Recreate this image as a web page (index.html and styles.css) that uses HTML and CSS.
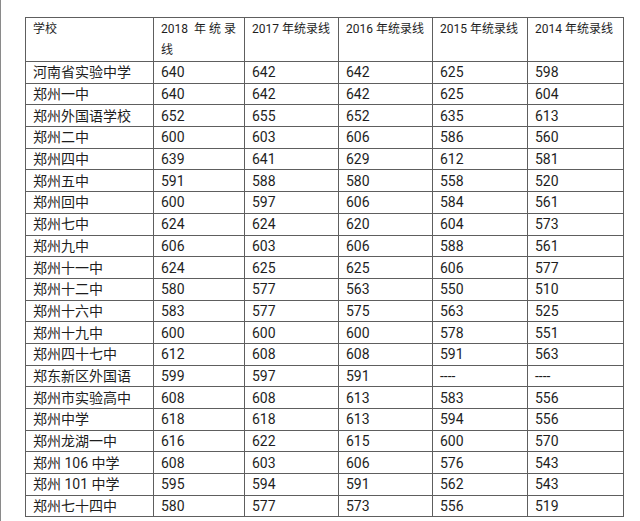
FILE: index.html
```html
<!DOCTYPE html>
<html lang="zh-CN">
<head>
<meta charset="utf-8">
<title>郑州高中统录线</title>
<link rel="stylesheet" href="styles.css">
</head>
<body>
<div class="page">
<table class="scores">
<colgroup>
<col class="c-school"><col class="c-2018"><col class="c-2017"><col class="c-2016"><col class="c-2015"><col class="c-2014">
</colgroup>
<thead>
<tr><th>学校</th><th class="wrap">2018 年统录线</th><th>2017 年统录线</th><th>2016 年统录线</th><th>2015 年统录线</th><th>2014 年统录线</th></tr>
</thead>
<tbody>
<tr><td>河南省实验中学</td><td>640</td><td>642</td><td>642</td><td>625</td><td>598</td></tr>
<tr><td>郑州一中</td><td>640</td><td>642</td><td>642</td><td>625</td><td>604</td></tr>
<tr><td>郑州外国语学校</td><td>652</td><td>655</td><td>652</td><td>635</td><td>613</td></tr>
<tr><td>郑州二中</td><td>600</td><td>603</td><td>606</td><td>586</td><td>560</td></tr>
<tr><td>郑州四中</td><td>639</td><td>641</td><td>629</td><td>612</td><td>581</td></tr>
<tr><td>郑州五中</td><td>591</td><td>588</td><td>580</td><td>558</td><td>520</td></tr>
<tr><td>郑州回中</td><td>600</td><td>597</td><td>606</td><td>584</td><td>561</td></tr>
<tr><td>郑州七中</td><td>624</td><td>624</td><td>620</td><td>604</td><td>573</td></tr>
<tr><td>郑州九中</td><td>606</td><td>603</td><td>606</td><td>588</td><td>561</td></tr>
<tr><td>郑州十一中</td><td>624</td><td>625</td><td>625</td><td>606</td><td>577</td></tr>
<tr><td>郑州十二中</td><td>580</td><td>577</td><td>563</td><td>550</td><td>510</td></tr>
<tr><td>郑州十六中</td><td>583</td><td>577</td><td>575</td><td>563</td><td>525</td></tr>
<tr><td>郑州十九中</td><td>600</td><td>600</td><td>600</td><td>578</td><td>551</td></tr>
<tr><td>郑州四十七中</td><td>612</td><td>608</td><td>608</td><td>591</td><td>563</td></tr>
<tr><td>郑东新区外国语</td><td>599</td><td>597</td><td>591</td><td>----</td><td>----</td></tr>
<tr><td>郑州市实验高中</td><td>608</td><td>608</td><td>613</td><td>583</td><td>556</td></tr>
<tr><td>郑州中学</td><td>618</td><td>618</td><td>613</td><td>594</td><td>556</td></tr>
<tr><td>郑州龙湖一中</td><td>616</td><td>622</td><td>615</td><td>600</td><td>570</td></tr>
<tr><td>郑州 106 中学</td><td>608</td><td>603</td><td>606</td><td>576</td><td>543</td></tr>
<tr><td>郑州 101 中学</td><td>595</td><td>594</td><td>591</td><td>562</td><td>543</td></tr>
<tr><td>郑州七十四中</td><td>580</td><td>577</td><td>573</td><td>556</td><td>519</td></tr>
</tbody>
</table>
</div>
</body>
</html>
```
FILE: styles.css
```css
html, body {
  margin: 0;
  padding: 0;
  background: #ffffff;
}
.page {
  box-sizing: border-box;
  width: 640px;
  height: 521px;
  border-left: 1px solid #8a8a8a;
  padding: 17px 0 0 24px;
  overflow: hidden;
}
.scores {
  border-collapse: collapse;
  table-layout: fixed;
  width: 599px;
  font-family: Roboto, "Noto Sans CJK SC", sans-serif;
  color: #1e1e1e;
}
.c-school { width: 128px; }
.c-2018 { width: 91px; }
.c-2017 { width: 94px; }
.c-2016 { width: 94px; }
.c-2015 { width: 95px; }
.c-2014 { width: 96px; }
.scores th,
.scores td {
  border: 1px solid #5e5e5e;
  padding: 0 7px;
  text-align: left;
  white-space: nowrap;
}
.scores th {
  font-weight: normal;
  font-size: 12px;
  line-height: 21px;
  vertical-align: top;
  padding-top: 1px;
  padding-bottom: 0;
}
.scores th.wrap {
  white-space: normal;
  text-align: justify;
  padding-right: 8px;
}
.scores td {
  font-size: 14px;
  height: 20.7px;
  line-height: 20px;
  vertical-align: middle;
}
```
